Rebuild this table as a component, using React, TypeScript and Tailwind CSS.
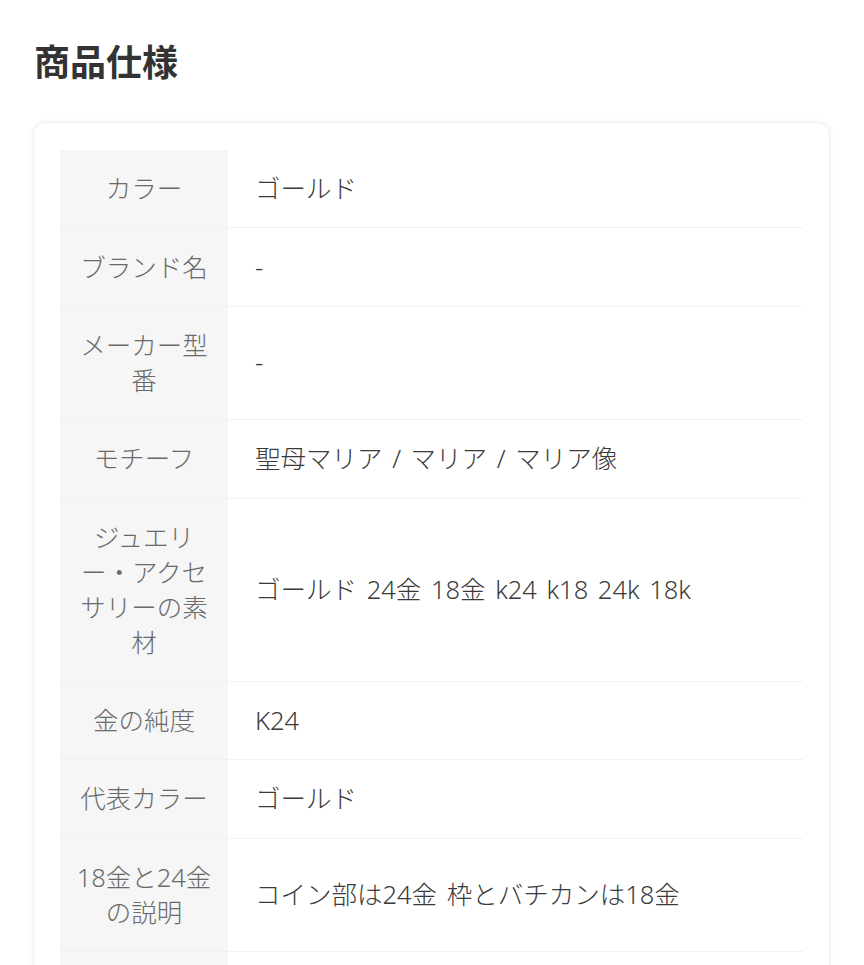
import React from "react";

const rows: { label: string; value: string }[] = [
  { label: "カラー", value: "ゴールド" },
  { label: "ブランド名", value: "-" },
  { label: "メーカー型番", value: "-" },
  { label: "モチーフ", value: "聖母マリア / マリア / マリア像" },
  { label: "ジュエリー・アクセサリーの素材", value: "ゴールド 24金 18金 k24 k18 24k 18k" },
  { label: "金の純度", value: "K24" },
  { label: "代表カラー", value: "ゴールド" },
  { label: "18金と24金の説明", value: "コイン部は24金 枠とバチカンは18金" },
  { label: "原産国", value: "日本" },
];

export default function App() {
  return (
    <div
      className="min-h-[965px] bg-white pl-[33px] pr-[34px] pt-[38px]"
      style={{ fontFamily: '"Noto Sans", "Noto Sans CJK JP", sans-serif' }}
    >
      <h1 className="pl-[1px] text-[36px] font-bold leading-[50px] text-[#333333]">商品仕様</h1>
      <div className="mt-[34px] rounded-[12px] border border-[#efefef] bg-white px-[26px] pt-[27px] pb-[26px] shadow-[0_0_6px_rgba(0,0,0,0.05)]">
        <div className="flex flex-col">
          {rows.map((r, i) => (
            <div key={i} className="flex border-b border-[#f1f1f1]">
              <div className="flex w-[168px] shrink-0 items-center justify-center bg-[#f6f6f6] px-[15px] py-[21.2px] text-center text-[25.5px] font-light leading-[35px] text-[#6a6a6a]">
                <span className="break-all">{r.label}</span>
              </div>
              <div className="flex flex-1 items-center px-[27px] py-[21.2px] text-[25.5px] font-light leading-[35px] text-[#3a3a3a] [word-spacing:3px]">
                {r.value}
              </div>
            </div>
          ))}
        </div>
      </div>
    </div>
  );
}
